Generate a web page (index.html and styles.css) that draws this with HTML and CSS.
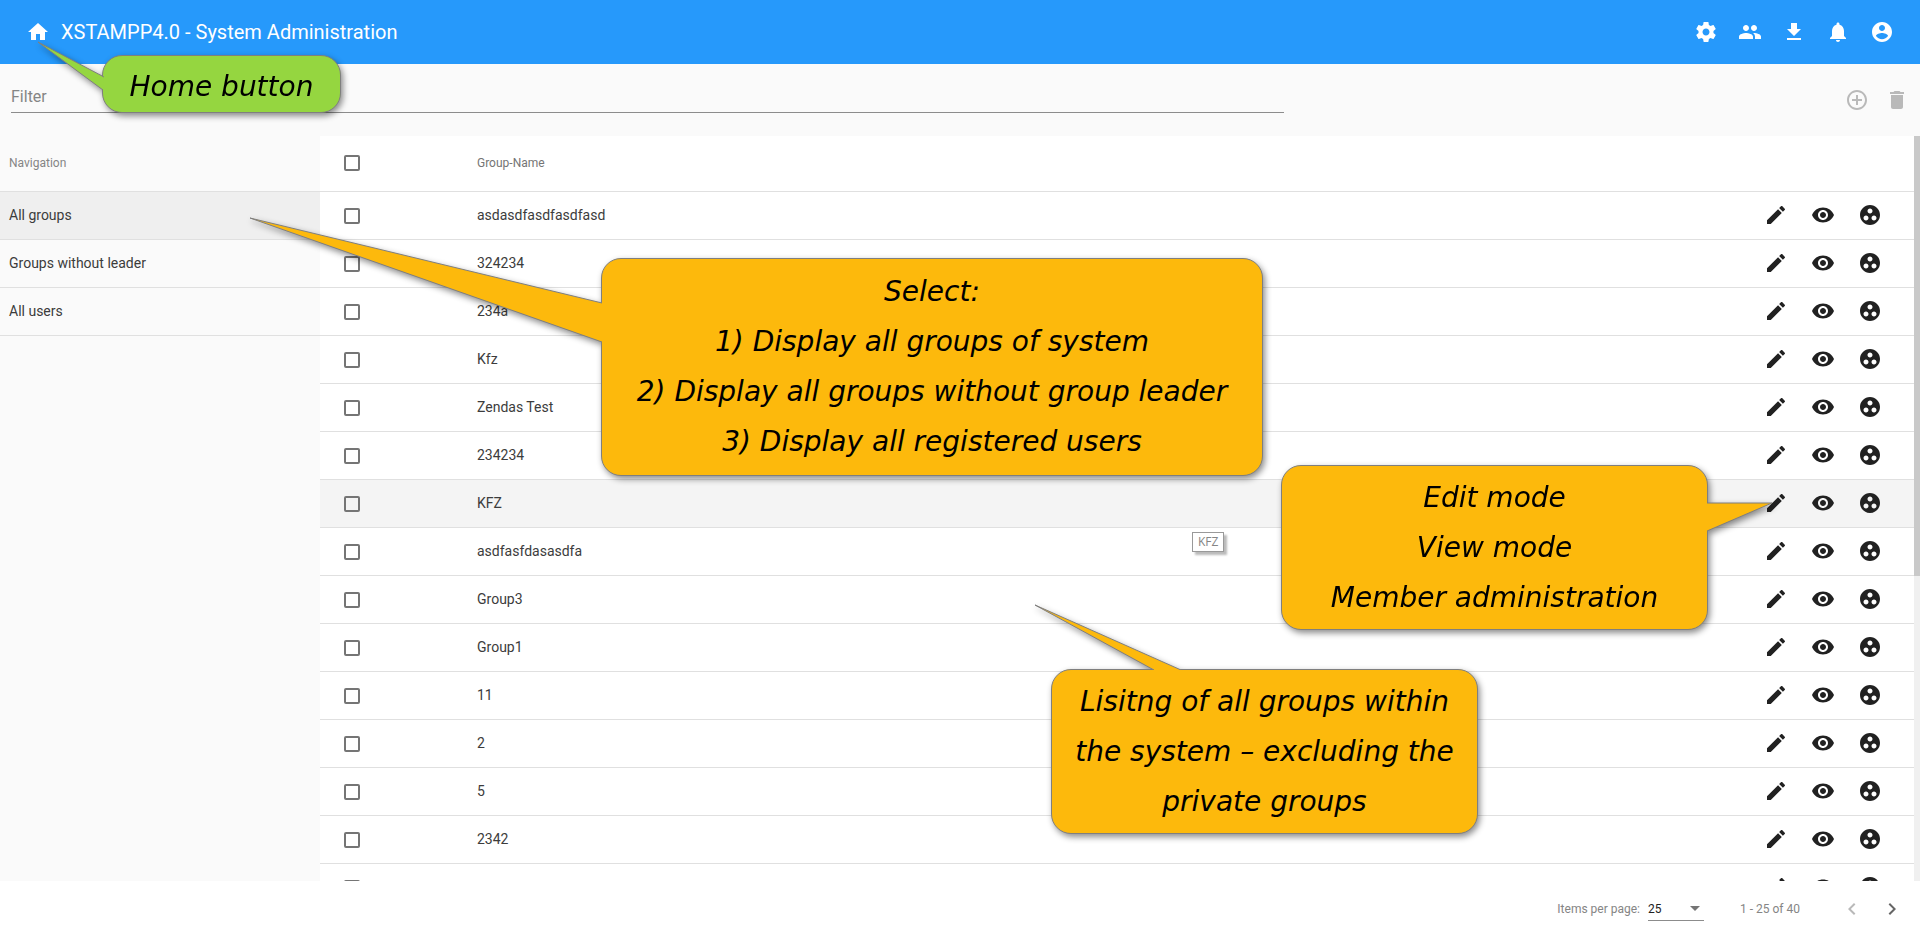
FILE: index.html
```html
<!DOCTYPE html>
<html lang="en">
<head>
<meta charset="utf-8">
<title>XSTAMPP4.0 - System Administration</title>
<meta name="viewport" content="width=device-width, initial-scale=1">
<link rel="stylesheet" href="styles.css">
</head>
<body>
<svg class="sprite" aria-hidden="true">
  <symbol id="home" viewBox="0 0 24 24"><path d="M10 20v-6h4v6h5v-8h3L12 3 2 12h3v8z"/></symbol>
  <symbol id="settings" viewBox="0 0 24 24"><path d="M19.43 12.98c.04-.32.07-.64.07-.98s-.03-.66-.07-.98l2.11-1.65c.19-.15.24-.42.12-.64l-2-3.46c-.12-.22-.39-.3-.61-.22l-2.49 1c-.52-.4-1.08-.73-1.69-.98l-.38-2.65C14.46 2.18 14.25 2 14 2h-4c-.25 0-.46.18-.49.42l-.38 2.65c-.61.25-1.17.59-1.69.98l-2.49-1c-.23-.09-.49 0-.61.22l-2 3.46c-.13.22-.07.49.12.64l2.11 1.65c-.04.32-.07.65-.07.98s.03.66.07.98l-2.11 1.65c-.19.15-.24.42-.12.64l2 3.46c.12.22.39.3.61.22l2.49-1c.52.4 1.08.73 1.69.98l.38 2.65c.03.24.24.42.49.42h4c.25 0 .46-.18.49-.42l.38-2.65c.61-.25 1.17-.59 1.69-.98l2.49 1c.23.09.49 0 .61-.22l2-3.46c.12-.22.07-.49-.12-.64l-2.11-1.65zM12 15.5c-1.93 0-3.5-1.57-3.5-3.5s1.57-3.5 3.5-3.5 3.5 1.57 3.5 3.5-1.57 3.5-3.5 3.5z"/></symbol>
  <symbol id="people" viewBox="0 0 24 24"><path d="M16 11c1.66 0 2.99-1.34 2.99-3S17.66 5 16 5c-1.66 0-3 1.34-3 3s1.34 3 3 3zm-8 0c1.66 0 2.99-1.34 2.99-3S9.66 5 8 5C6.34 5 5 6.34 5 8s1.34 3 3 3zm0 2c-2.33 0-7 1.17-7 3.5V19h14v-2.5c0-2.33-4.67-3.5-7-3.5zm8 0c-.29 0-.62.02-.97.05 1.16.84 1.97 1.97 1.97 3.45V19h6v-2.5c0-2.33-4.67-3.5-7-3.5z"/></symbol>
  <symbol id="download" viewBox="0 0 24 24"><path d="M19 9h-4V3H9v6H5l7 7 7-7zM5 18v2h14v-2H5z"/></symbol>
  <symbol id="bell" viewBox="0 0 24 24"><path d="M12 22c1.1 0 2-.9 2-2h-4c0 1.1.89 2 2 2zm6-6v-5c0-3.07-1.64-5.64-4.5-6.32V4c0-.83-.67-1.5-1.5-1.5s-1.5.67-1.5 1.5v.68C7.63 5.36 6 7.92 6 11v5l-2 2v1h16v-1l-2-2z"/></symbol>
  <symbol id="account" viewBox="0 0 24 24"><path d="M12 2C6.48 2 2 6.48 2 12s4.48 10 10 10 10-4.48 10-10S17.52 2 12 2zm0 3c1.66 0 3 1.34 3 3s-1.34 3-3 3-3-1.34-3-3 1.34-3 3-3zm0 14.2c-2.5 0-4.71-1.28-6-3.22.03-1.99 4-3.08 6-3.08 1.99 0 5.97 1.09 6 3.08-1.29 1.94-3.5 3.22-6 3.22z"/></symbol>
  <symbol id="add" viewBox="0 0 24 24"><path d="M13 7h-2v4H7v2h4v4h2v-4h4v-2h-4V7zm-1-5C6.48 2 2 6.48 2 12s4.48 10 10 10 10-4.48 10-10S17.52 2 12 2zm0 18c-4.41 0-8-3.59-8-8s3.59-8 8-8 8 3.59 8 8-3.59 8-8 8z"/></symbol>
  <symbol id="trash" viewBox="0 0 24 24"><path d="M6 19c0 1.1.9 2 2 2h8c1.1 0 2-.9 2-2V7H6v12zM19 4h-3.5l-1-1h-5l-1 1H5v2h14V4z"/></symbol>
  <symbol id="edit" viewBox="0 0 24 24"><path d="M3 17.25V21h3.75L17.81 9.94l-3.75-3.75L3 17.25zM20.71 7.04c.39-.39.39-1.02 0-1.41l-2.34-2.34c-.39-.39-1.02-.39-1.41 0l-1.83 1.83 3.75 3.75 1.83-1.83z"/></symbol>
  <symbol id="view" viewBox="0 0 24 24"><path d="M12 4.5C7 4.5 2.73 7.61 1 12c1.73 4.39 6 7.5 11 7.5s9.27-3.11 11-7.5c-1.73-4.39-6-7.5-11-7.5zM12 17c-2.76 0-5-2.24-5-5s2.24-5 5-5 5 2.24 5 5-2.24 5-5 5zm0-8c-1.66 0-3 1.34-3 3s1.34 3 3 3 3-1.34 3-3-1.34-3-3-3z"/></symbol>
  <symbol id="members" viewBox="0 0 24 24"><path d="M12 2C6.48 2 2 6.48 2 12s4.48 10 10 10 10-4.48 10-10S17.52 2 12 2zM8 17.5c-1.38 0-2.5-1.12-2.5-2.5s1.12-2.5 2.5-2.5 2.5 1.12 2.5 2.5-1.12 2.5-2.5 2.5zM9.5 8c0-1.38 1.12-2.5 2.5-2.5s2.5 1.12 2.5 2.5-1.12 2.5-2.5 2.5S9.5 9.38 9.5 8zm6.5 9.5c-1.38 0-2.5-1.12-2.5-2.5s1.12-2.5 2.5-2.5 2.5 1.12 2.5 2.5-1.12 2.5-2.5 2.5z"/></symbol>
  <symbol id="prev" viewBox="0 0 24 24"><path d="M15.41 7.41L14 6l-6 6 6 6 1.41-1.41L10.83 12z"/></symbol>
  <symbol id="next" viewBox="0 0 24 24"><path d="M10 6L8.59 7.41 13.17 12l-4.58 4.59L10 18l6-6z"/></symbol>
</svg>

<div class="app">
  <header class="toolbar">
    <button class="icon-button" aria-label="Home"><svg class="icon"><use href="#home"/></svg></button>
    <h1 class="toolbar-title">XSTAMPP4.0 - System Administration</h1>
    <div class="toolbar-actions">
      <button class="icon-button" aria-label="Settings"><svg class="icon"><use href="#settings"/></svg></button>
      <button class="icon-button" aria-label="Users"><svg class="icon"><use href="#people"/></svg></button>
      <button class="icon-button" aria-label="Download"><svg class="icon"><use href="#download"/></svg></button>
      <button class="icon-button" aria-label="Notifications"><svg class="icon"><use href="#bell"/></svg></button>
      <button class="icon-button" aria-label="Account"><svg class="icon"><use href="#account"/></svg></button>
    </div>
  </header>

  <div class="filter-bar">
    <input class="filter-input" type="text" placeholder="Filter" aria-label="Filter">
    <div class="filter-actions">
      <button class="icon-button" aria-label="Add group" disabled><svg class="icon"><use href="#add"/></svg></button>
      <button class="icon-button" aria-label="Delete groups" disabled><svg class="icon"><use href="#trash"/></svg></button>
    </div>
  </div>

  <main class="content">
    <nav class="side-nav" aria-labelledby="nav-title">
      <h2 class="side-title" id="nav-title">Navigation</h2>
      <a class="side-link side-link-active" href="#all-groups">All groups</a>
      <a class="side-link" href="#without-leader">Groups without leader</a>
      <a class="side-link" href="#all-users">All users</a>
    </nav>
    <div class="table-area">
      <table class="groups">
        <thead>
          <tr><th class="check-cell"><input class="check" type="checkbox" aria-label="Select all groups"></th><th class="name-cell">Group-Name</th><th class="action-cell"></th></tr>
        </thead>
        <tbody>
          <tr><td class="check-cell"><input class="check" type="checkbox" aria-label="Select asdasdfasdfasdfasd"></td><td class="name-cell">asdasdfasdfasdfasd</td><td class="action-cell"><div class="row-actions"><button class="icon-button" aria-label="Edit"><svg class="icon"><use href="#edit"/></svg></button><button class="icon-button" aria-label="View"><svg class="icon"><use href="#view"/></svg></button><button class="icon-button" aria-label="Members"><svg class="icon"><use href="#members"/></svg></button></div></td></tr>
          <tr><td class="check-cell"><input class="check" type="checkbox" aria-label="Select 324234"></td><td class="name-cell">324234</td><td class="action-cell"><div class="row-actions"><button class="icon-button" aria-label="Edit"><svg class="icon"><use href="#edit"/></svg></button><button class="icon-button" aria-label="View"><svg class="icon"><use href="#view"/></svg></button><button class="icon-button" aria-label="Members"><svg class="icon"><use href="#members"/></svg></button></div></td></tr>
          <tr><td class="check-cell"><input class="check" type="checkbox" aria-label="Select 234a"></td><td class="name-cell">234a</td><td class="action-cell"><div class="row-actions"><button class="icon-button" aria-label="Edit"><svg class="icon"><use href="#edit"/></svg></button><button class="icon-button" aria-label="View"><svg class="icon"><use href="#view"/></svg></button><button class="icon-button" aria-label="Members"><svg class="icon"><use href="#members"/></svg></button></div></td></tr>
          <tr><td class="check-cell"><input class="check" type="checkbox" aria-label="Select Kfz"></td><td class="name-cell">Kfz</td><td class="action-cell"><div class="row-actions"><button class="icon-button" aria-label="Edit"><svg class="icon"><use href="#edit"/></svg></button><button class="icon-button" aria-label="View"><svg class="icon"><use href="#view"/></svg></button><button class="icon-button" aria-label="Members"><svg class="icon"><use href="#members"/></svg></button></div></td></tr>
          <tr><td class="check-cell"><input class="check" type="checkbox" aria-label="Select Zendas Test"></td><td class="name-cell">Zendas Test</td><td class="action-cell"><div class="row-actions"><button class="icon-button" aria-label="Edit"><svg class="icon"><use href="#edit"/></svg></button><button class="icon-button" aria-label="View"><svg class="icon"><use href="#view"/></svg></button><button class="icon-button" aria-label="Members"><svg class="icon"><use href="#members"/></svg></button></div></td></tr>
          <tr><td class="check-cell"><input class="check" type="checkbox" aria-label="Select 234234"></td><td class="name-cell">234234</td><td class="action-cell"><div class="row-actions"><button class="icon-button" aria-label="Edit"><svg class="icon"><use href="#edit"/></svg></button><button class="icon-button" aria-label="View"><svg class="icon"><use href="#view"/></svg></button><button class="icon-button" aria-label="Members"><svg class="icon"><use href="#members"/></svg></button></div></td></tr>
          <tr class="row-hover"><td class="check-cell"><input class="check" type="checkbox" aria-label="Select KFZ"></td><td class="name-cell">KFZ</td><td class="action-cell"><div class="row-actions"><button class="icon-button" aria-label="Edit"><svg class="icon"><use href="#edit"/></svg></button><button class="icon-button" aria-label="View"><svg class="icon"><use href="#view"/></svg></button><button class="icon-button" aria-label="Members"><svg class="icon"><use href="#members"/></svg></button></div></td></tr>
          <tr><td class="check-cell"><input class="check" type="checkbox" aria-label="Select asdfasfdasasdfa"></td><td class="name-cell">asdfasfdasasdfa</td><td class="action-cell"><div class="row-actions"><button class="icon-button" aria-label="Edit"><svg class="icon"><use href="#edit"/></svg></button><button class="icon-button" aria-label="View"><svg class="icon"><use href="#view"/></svg></button><button class="icon-button" aria-label="Members"><svg class="icon"><use href="#members"/></svg></button></div></td></tr>
          <tr><td class="check-cell"><input class="check" type="checkbox" aria-label="Select Group3"></td><td class="name-cell">Group3</td><td class="action-cell"><div class="row-actions"><button class="icon-button" aria-label="Edit"><svg class="icon"><use href="#edit"/></svg></button><button class="icon-button" aria-label="View"><svg class="icon"><use href="#view"/></svg></button><button class="icon-button" aria-label="Members"><svg class="icon"><use href="#members"/></svg></button></div></td></tr>
          <tr><td class="check-cell"><input class="check" type="checkbox" aria-label="Select Group1"></td><td class="name-cell">Group1</td><td class="action-cell"><div class="row-actions"><button class="icon-button" aria-label="Edit"><svg class="icon"><use href="#edit"/></svg></button><button class="icon-button" aria-label="View"><svg class="icon"><use href="#view"/></svg></button><button class="icon-button" aria-label="Members"><svg class="icon"><use href="#members"/></svg></button></div></td></tr>
          <tr><td class="check-cell"><input class="check" type="checkbox" aria-label="Select 11"></td><td class="name-cell">11</td><td class="action-cell"><div class="row-actions"><button class="icon-button" aria-label="Edit"><svg class="icon"><use href="#edit"/></svg></button><button class="icon-button" aria-label="View"><svg class="icon"><use href="#view"/></svg></button><button class="icon-button" aria-label="Members"><svg class="icon"><use href="#members"/></svg></button></div></td></tr>
          <tr><td class="check-cell"><input class="check" type="checkbox" aria-label="Select 2"></td><td class="name-cell">2</td><td class="action-cell"><div class="row-actions"><button class="icon-button" aria-label="Edit"><svg class="icon"><use href="#edit"/></svg></button><button class="icon-button" aria-label="View"><svg class="icon"><use href="#view"/></svg></button><button class="icon-button" aria-label="Members"><svg class="icon"><use href="#members"/></svg></button></div></td></tr>
          <tr><td class="check-cell"><input class="check" type="checkbox" aria-label="Select 5"></td><td class="name-cell">5</td><td class="action-cell"><div class="row-actions"><button class="icon-button" aria-label="Edit"><svg class="icon"><use href="#edit"/></svg></button><button class="icon-button" aria-label="View"><svg class="icon"><use href="#view"/></svg></button><button class="icon-button" aria-label="Members"><svg class="icon"><use href="#members"/></svg></button></div></td></tr>
          <tr><td class="check-cell"><input class="check" type="checkbox" aria-label="Select 2342"></td><td class="name-cell">2342</td><td class="action-cell"><div class="row-actions"><button class="icon-button" aria-label="Edit"><svg class="icon"><use href="#edit"/></svg></button><button class="icon-button" aria-label="View"><svg class="icon"><use href="#view"/></svg></button><button class="icon-button" aria-label="Members"><svg class="icon"><use href="#members"/></svg></button></div></td></tr>
          <tr><td class="check-cell"><input class="check" type="checkbox" aria-label="Select group"></td><td class="name-cell"></td><td class="action-cell"><div class="row-actions"><button class="icon-button" aria-label="Edit"><svg class="icon"><use href="#edit"/></svg></button><button class="icon-button" aria-label="View"><svg class="icon"><use href="#view"/></svg></button><button class="icon-button" aria-label="Members"><svg class="icon"><use href="#members"/></svg></button></div></td></tr>
        </tbody>
      </table>
    </div>
    <div class="scroll-track"><div class="scroll-thumb"></div></div>
  </main>

  <footer class="paginator">
    <label class="page-label" for="page-size">Items per page:</label>
    <div class="page-select">
      <select class="page-size" id="page-size"><option>25</option></select>
      <svg class="page-arrow" viewBox="0 0 10 5" aria-hidden="true"><path d="M0 0h10L5 5z"/></svg>
    </div>
    <span class="page-range">1 - 25 of 40</span>
    <button class="page-button" aria-label="Previous page" disabled><svg class="icon"><use href="#prev"/></svg></button>
    <button class="page-button" aria-label="Next page"><svg class="icon"><use href="#next"/></svg></button>
  </footer>
</div>

<div class="tooltip" role="tooltip">KFZ</div>

<div class="callout callout-home">
  <svg class="tail tail-home" viewBox="0 0 67 50" aria-hidden="true"><path d="M67 36L1 1l65 48"/></svg>
  <p class="callout-text">Home button</p>
</div>
<div class="callout callout-select">
  <svg class="tail tail-select" viewBox="0 0 353 126" aria-hidden="true"><path d="M353 86L1 1l352 124"/></svg>
  <p class="callout-text">Select:<br>1) Display all groups of system<br>2) Display all groups without group leader<br>3) Display all registered users</p>
</div>
<div class="callout callout-modes">
  <svg class="tail tail-modes" viewBox="0 0 66 30" aria-hidden="true"><path d="M0 1h65L0 29"/></svg>
  <p class="callout-text">Edit mode<br>View mode<br>Member administration</p>
</div>
<div class="callout callout-list">
  <svg class="tail tail-list" viewBox="0 0 148 66" aria-hidden="true"><path d="M120 66L1 1l146 65"/></svg>
  <p class="callout-text">Lisitng of all groups within<br>the system – excluding the<br>private groups</p>
</div>
</body>
</html>
```

FILE: styles.css
```css
* {
  box-sizing: border-box;
}

body {
  margin: 0;
  font-family: Roboto, "Liberation Sans", sans-serif;
  font-size: 14px;
  color: #212121;
  background: #fff;
}

button {
  padding: 0;
  border: 0;
  background: none;
  color: inherit;
  font: inherit;
}

.sprite {
  position: absolute;
  width: 0;
  height: 0;
}

.app {
  display: flex;
  flex-direction: column;
  height: 100vh;
  overflow: hidden;
}

.icon {
  display: block;
  width: 24px;
  height: 24px;
  fill: currentColor;
}

.icon-button {
  flex: none;
  width: 24px;
  height: 24px;
}

.icon-button:disabled,
.page-button:disabled {
  color: #b9b9b9;
}

/* Top bar */
.toolbar {
  display: flex;
  flex: none;
  align-items: center;
  gap: 11px;
  height: 64px;
  padding: 0 26px;
  background: #2699fb;
  color: #fff;
}

.toolbar-title {
  flex: 1;
  margin: 0;
  font-size: 20px;
  font-weight: 400;
}

.toolbar-actions {
  display: flex;
  gap: 20px;
}

/* Filter */
.filter-bar {
  display: grid;
  flex: none;
  grid-template-columns: 2fr 1fr;
  height: 72px;
  padding-left: 11px;
  background: #fafafa;
}

.filter-input {
  height: 33px;
  margin-top: 16px;
  padding: 0;
  border: 0;
  border-bottom: 1px solid #8c8c8c;
  border-radius: 0;
  outline: 0;
  background: none;
  font: inherit;
  font-size: 16px;
}

.filter-input::placeholder {
  color: #858585;
}

.filter-actions {
  display: flex;
  align-items: center;
  justify-content: flex-end;
  gap: 16px;
  padding-right: 11px;
}

/* Content */
.content {
  display: flex;
  flex: 1;
  min-height: 0;
}

.side-nav {
  flex: none;
  width: 320px;
  background: #fafafa;
}

.side-title {
  height: 56px;
  margin: 0;
  padding: 0 9px;
  border-bottom: 1px solid #e0e0e0;
  color: #858585;
  font-size: 12px;
  font-weight: 400;
  line-height: 54px;
}

.side-link {
  display: block;
  height: 48px;
  padding: 0 9px;
  border-bottom: 1px solid #e0e0e0;
  color: #3c3c3c;
  line-height: 47px;
  text-decoration: none;
}

.side-link-active {
  background: #efefef;
}

.table-area {
  flex: 1;
  min-width: 0;
  overflow: hidden;
}

.groups {
  width: 100%;
  border-spacing: 0;
}

.groups th,
.groups td {
  height: 48px;
  padding: 0 0 2px;
  border-bottom: 1px solid #e0e0e0;
  color: #3c3c3c;
  text-align: left;
}

.groups th {
  height: 56px;
  color: #757575;
  font-size: 12px;
  font-weight: 400;
}

.groups .check-cell {
  width: 157px;
  padding-left: 24px;
}

.groups td.check-cell {
  padding-bottom: 0;
}

.groups .action-cell {
  width: 150px;
  padding-right: 32px;
  color: #212121;
}

.row-hover {
  background: #f4f4f4;
}

.row-actions {
  display: flex;
  gap: 23px;
}

.check {
  display: block;
  width: 16px;
  height: 16px;
  margin: 0;
  border: 2px solid #757575;
  border-radius: 2px;
  appearance: none;
}

.scroll-track {
  flex: none;
  width: 6px;
  background: #f0f0f0;
}

.scroll-thumb {
  height: 59%;
  background: #c9c9c9;
}

/* Paginator */
.paginator {
  display: flex;
  flex: none;
  align-items: center;
  justify-content: flex-end;
  height: 56px;
  padding-right: 8px;
  background: #fff;
  color: #858585;
  font-size: 12px;
}

.page-label {
  margin-right: 8px;
}

.page-select {
  display: grid;
  align-items: center;
  width: 56px;
  height: 24px;
  border-bottom: 1px solid #8c8c8c;
}

.page-size,
.page-arrow {
  grid-area: 1 / 1;
}

.page-size {
  width: 100%;
  padding: 0;
  border: 0;
  outline: 0;
  background: none;
  color: #212121;
  font: inherit;
  appearance: none;
}

.page-arrow {
  justify-self: end;
  width: 10px;
  height: 5px;
  margin-right: 4px;
  fill: #757575;
  pointer-events: none;
}

.page-range {
  margin: 0 32px 0 36px;
}

.page-button {
  display: grid;
  place-items: center;
  width: 40px;
  height: 40px;
  color: #666;
}

/* Overlays */
.tooltip {
  position: absolute;
  top: 532px;
  left: 1192px;
  padding: 0 5px;
  border: 1px solid #999;
  background: #fff;
  box-shadow: 3px 3px 2px #bbb;
  color: #858585;
  font-family: "Open Sans", sans-serif;
  font-size: 12px;
  line-height: 18px;
}

.callout {
  position: absolute;
  display: grid;
  border: 1px solid #7f7f7f;
  border-radius: 20px;
  background: #fdb90c;
  color: #000;
  filter: drop-shadow(2px 3px 3px rgba(0, 0, 0, .45));
}

.callout-text {
  align-self: center;
  margin: 0;
  font-family: "Segoe Print", "DejaVu Sans", sans-serif;
  font-size: 28px;
  font-style: italic;
  line-height: 50px;
  text-align: center;
  white-space: nowrap;
}

.tail {
  position: absolute;
  fill: #fdb90c;
  stroke: #7f7f7f;
  stroke-width: 1px;
}

.callout-home {
  top: 55px;
  left: 102px;
  width: 239px;
  height: 58px;
  padding-top: 6px;
  background: #95d640;
}

.callout-select {
  top: 258px;
  left: 601px;
  width: 662px;
  height: 218px;
}

.callout-modes {
  top: 465px;
  left: 1281px;
  width: 427px;
  height: 165px;
}

.callout-list {
  top: 669px;
  left: 1051px;
  width: 427px;
  height: 165px;
}

.tail-home {
  top: -15px;
  left: -66px;
  width: 67px;
  height: 50px;
  fill: #95d640;
}

.tail-select {
  top: -42px;
  left: -353px;
  width: 353px;
  height: 126px;
}

.tail-modes {
  top: 36px;
  right: -66px;
  width: 66px;
  height: 30px;
}

.tail-list {
  top: -66px;
  left: -18px;
  width: 148px;
  height: 66px;
}
```
